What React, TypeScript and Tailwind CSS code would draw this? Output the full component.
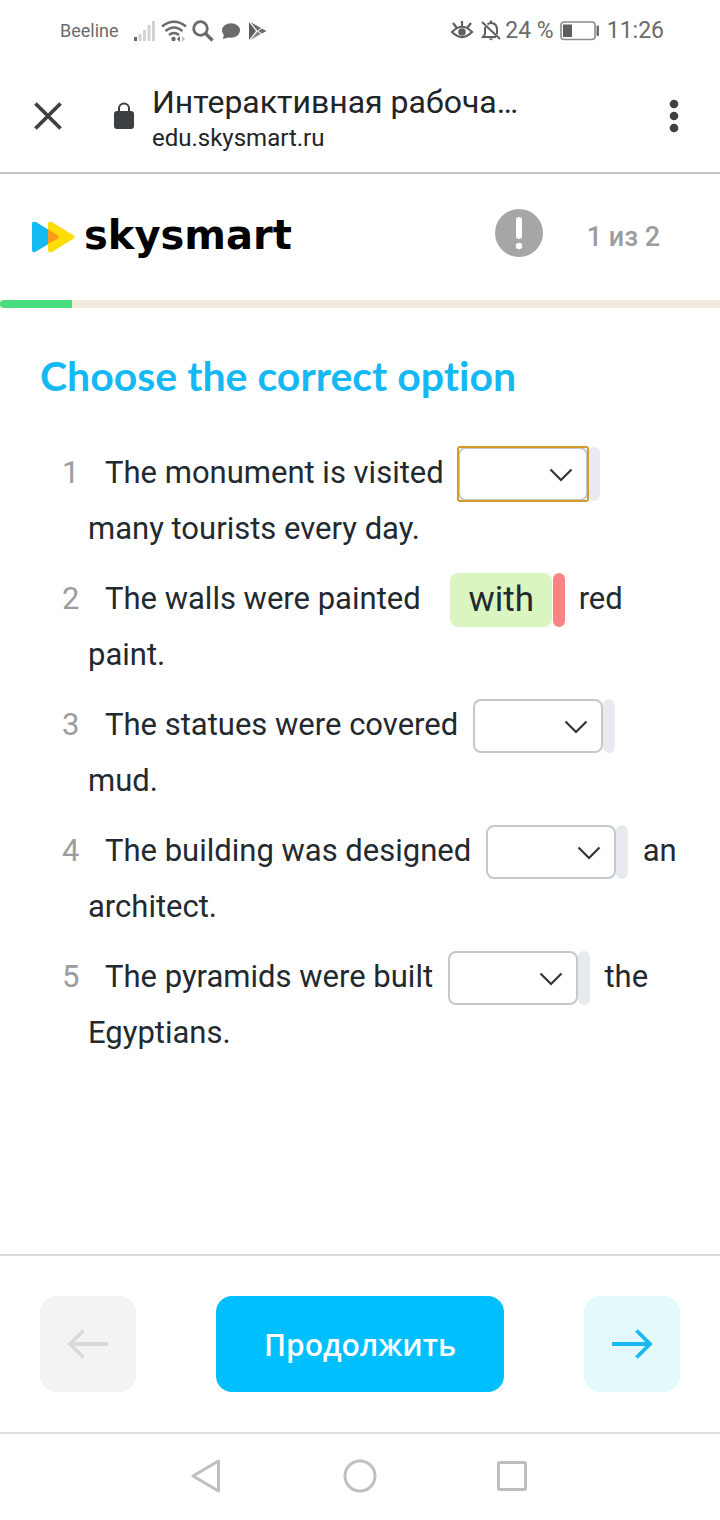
import type { ReactNode } from "react";

type Question = { id: number; before: string; after: string[]; answer?: string; focused?: boolean };

const questions: Question[] = [
  { id: 1, before: "The monument is visited", after: ["many tourists every day."], focused: true },
  { id: 2, before: "The walls were painted", after: ["red", "paint."], answer: "with" },
  { id: 3, before: "The statues were covered", after: ["mud."] },
  { id: 4, before: "The building was designed", after: ["an", "architect."] },
  { id: 5, before: "The pyramids were built", after: ["the", "Egyptians."] },
];

function StatusBar() {
  return (
    <div className="flex h-[62px] items-center justify-between pr-[56px] pl-[60px] text-[#6b6b6b]">
      <div className="flex items-center gap-[5px]">
        <span className="mr-[10px] text-[18px] leading-6">Beeline</span>
        <svg width="22" height="22" viewBox="0 0 22 22" aria-hidden="true">
          <path d="M0 17h3v4H0z" fill="#6b6b6b" />
          <path d="M4.500 14h3v7h-3zM9 10h3v11H9zM13.500 5h3v16h-3zM18 1h3v20h-3z" fill="#d2d2d2" />
        </svg>
        <svg width="26" height="22" viewBox="0 0 26 22" fill="none" stroke="#6b6b6b" strokeWidth="2.400" aria-hidden="true">
          <path d="M1 6.500Q13-3 25 6.500M4.500 11Q13 4 21.500 11M8 15Q13 11 18 15" />
          <circle cx="12.500" cy="19" r="2.200" fill="#6b6b6b" stroke="none" />
          <path d="M19 16l-3 3 3 3z" fill="#6b6b6b" stroke="none" />
          <path d="M21 16l3 3-3 3z" fill="#bdbdbd" stroke="none" />
        </svg>
        <svg width="22" height="22" viewBox="0 0 22 22" fill="none" stroke="#6b6b6b" aria-hidden="true">
          <circle cx="8.500" cy="8.500" r="6.800" strokeWidth="2.800" />
          <path d="M13.500 13.500l7 7" strokeWidth="3.400" />
        </svg>
        <svg className="ml-[2px]" width="20" height="20" viewBox="0 0 20 20" fill="#6b6b6b" aria-hidden="true">
          <ellipse cx="10" cy="9.500" rx="9" ry="7.300" />
          <path d="M3 13l-1 5 7-2z" />
        </svg>
        <svg className="ml-[2px]" width="20" height="20" viewBox="0 0 20 20" aria-hidden="true">
          <path d="M1 1l7 9-7 9z" fill="#5f5f5f" />
          <path d="M2.500 1L13 7l-3.500 2.800z" fill="#6b6b6b" />
          <path d="M2.500 19L13 13l-3.500-2.800z" fill="#8b8b8b" />
          <path d="M14 7.500L18.500 10 14 12.500l-3.500-2.500z" fill="#6b6b6b" />
        </svg>
      </div>
      <div className="flex items-center text-[23px] leading-7">
        <svg width="24" height="22" viewBox="0 0 24 22" fill="none" stroke="#5f5f5f" strokeWidth="2.200" aria-hidden="true">
          <path d="M2 12Q12 1.500 22 12Q12 22 2 12zM12 6V1M6.500 7.500L3 3M17.500 7.500L21 3" />
          <circle cx="12" cy="12" r="3.800" fill="#5f5f5f" stroke="none" />
        </svg>
        <svg className="mr-[4px] ml-[7px]" width="20" height="22" viewBox="0 0 20 22" fill="none" stroke="#5f5f5f" strokeWidth="2" aria-hidden="true">
          <path d="M1 2l18 17M4 7v7l-2 3h13M6.500 4.500Q8 3 10 3q6 0 6 7v4M10 3V0.500" />
          <path d="M7.500 18.500h5L10 20.500z" fill="#5f5f5f" stroke="none" />
        </svg>
        <span>24 %</span>
        <svg className="mr-[8px] ml-[6px]" width="39" height="20" viewBox="0 0 39 20" aria-hidden="true">
          <rect x="1" y="1" width="34" height="17.500" rx="3" fill="none" stroke="#8b8b8b" strokeWidth="1.600" />
          <path d="M3 3.500h9v12.500H3z" fill="#5f5f5f" />
          <rect x="36.500" y="4.500" width="2.500" height="10.500" rx="1" fill="#6b6b6b" />
        </svg>
        <span>11:26</span>
      </div>
    </div>
  );
}

function BrowserBar() {
  return (
    <div className="flex h-[112px] items-center border-b-2 border-[#c4c4c4] pr-[40px] pb-[2px] pl-[34px]">
      <button type="button" aria-label="Закрыть" className="mr-[52px] shrink-0">
        <svg width="28" height="28" viewBox="0 0 28 28" stroke="#3c4043" strokeWidth="3.800" aria-hidden="true">
          <path d="M1.500 1.500l25 25M26.500 1.500l-25 25" />
        </svg>
      </button>
      <svg className="mr-[18px] shrink-0" width="20" height="28" viewBox="0 0 20 28" aria-hidden="true">
        <path d="M5 11V6.500a5 5 0 0 1 10 0V11" fill="none" stroke="#3c4043" strokeWidth="2" />
        <rect y="9" width="20" height="18" rx="3" fill="#3c4043" />
      </svg>
      <div className="min-w-0 flex-1 pt-[4px] text-[#222426]">
        <div className="text-[32px] leading-[40px] whitespace-nowrap">Интерактивная рабоча…</div>
        <div className="text-[24px] leading-[32px]">edu.skysmart.ru</div>
      </div>
      <button type="button" aria-label="Меню" className="shrink-0">
        <svg width="12" height="34" viewBox="0 0 12 34" fill="#3c4043" aria-hidden="true">
          <circle cx="6" cy="5" r="4.300" />
          <circle cx="6" cy="17" r="4.300" />
          <circle cx="6" cy="29" r="4.300" />
        </svg>
      </button>
    </div>
  );
}

function LessonHeader() {
  return (
    <header>
      <div className="flex h-[126px] items-center pr-[60px] pl-[32px]">
        <a href="#" className="flex items-center gap-[8px] text-black">
          <svg width="44" height="32" viewBox="0 0 44 32" aria-hidden="true">
            <path d="M3 1Q0 0 0 3V29Q0 32 3 31L25 18Q28 16 25 14L4 1z" fill="#12b9f2" />
            <path d="M20 1Q16 0 16 3V29Q16 32 20 31L41 18Q44 16 41 14L20 1z" fill="#fddd08" />
            <path d="M16 8L25 14Q28 16 25 18L16 23z" fill="#f99a1c" />
          </svg>
          <span className="pb-[4px] font-['DejaVu_Sans',sans-serif] text-[40px] leading-[44px] font-bold">skysmart</span>
        </a>
        <button type="button" aria-label="Сообщить об ошибке" className="mr-[44px] ml-auto pb-[8px]">
          <svg width="48" height="48" viewBox="0 0 48 48" aria-hidden="true">
            <circle cx="24" cy="24" r="24" fill="#a6a6a6" />
            <path d="M24 11v16" stroke="#fff" strokeWidth="6" strokeLinecap="round" />
            <circle cx="24" cy="37" r="3.200" fill="#fff" />
          </svg>
        </button>
        <span className="text-[27px] leading-[36px] font-medium text-[#9c9c9c]">1 из 2</span>
      </div>
      <div className="h-2 bg-[#f2eada]" role="progressbar" aria-valuenow={10} aria-valuemin={0} aria-valuemax={100}>
        <div className="h-full w-1/10 rounded-l-full bg-[#47de80]" />
      </div>
    </header>
  );
}

function Gap({ question }: { question: Question }) {
  if (question.answer) {
    return (
      <span className="-mt-1.5 -mb-1 mr-[6px] ml-[22px] inline-flex h-[54px] align-middle">
        <span className="mr-px flex items-center rounded-lg bg-[#daf5c0] px-[18px] text-[35px] leading-none">{question.answer}</span>
        <span className="w-3 rounded-md bg-[#fb8383]" />
      </span>
    );
  }
  return (
    <span className="-mt-1.5 -mb-1 mx-[7px] inline-flex h-[54px] align-middle">
      <span
        className={
          question.focused
            ? "relative flex rounded-xs outline-2 -outline-offset-1 outline-[#d39a2c]"
            : "relative flex"
        }
      >
        <select
          aria-label={question.before}
          defaultValue=""
          className="w-[130px] appearance-none rounded-lg border-2 border-[#c6c8ca] bg-white px-3"
        >
          <option value=""></option>
          <option value="by">by</option>
          <option value="with">with</option>
        </select>
        <svg className="pointer-events-none absolute top-[21px] right-[15px]" width="24" height="14" viewBox="0 0 24 14" fill="none" stroke="#333" strokeWidth="2.200" aria-hidden="true">
          <path d="M1.500 1.500L12 12 22.500 1.500" />
        </svg>
      </span>
      <span className="w-3 rounded-md bg-[#e7eaee]" />
    </span>
  );
}

function Exercise() {
  return (
    <main className="flex-1 px-[40px] pt-[42px]">
      <h1 className="font-['Lato',sans-serif] text-[41px] leading-[52px] font-bold text-[#14b8f2] [font-variant-ligatures:none]">
        Choose the correct option
      </h1>
      <ol className="mt-[43px] flex flex-col gap-[14px] pl-[48px] text-[31px] leading-[56px] text-[#22292f]">
        {questions.map((q) => (
          <li key={q.id} className="-indent-[26px]">
            <span className="inline-block w-[43px] indent-0 text-[#9a9da0]">{q.id}</span>
            <span>{q.before}</span>{" "}
            <span className="indent-0">
              <Gap question={q} />
            </span>
            {q.after.map((part) => (
              <span key={part}> {part}</span>
            ))}
          </li>
        ))}
      </ol>
    </main>
  );
}

function ArrowButton({ label, className, disabled, children }: { label: string; className: string; disabled?: boolean; children: ReactNode }) {
  return (
    <button type="button" aria-label={label} disabled={disabled} className={className}>
      <svg width="42" height="32" viewBox="0 0 42 32" fill="none" stroke="currentColor" strokeWidth="3.800" aria-hidden="true">
        {children}
      </svg>
    </button>
  );
}

function Footer() {
  return (
    <footer className="flex h-[178px] items-center justify-between border-t-2 border-[#d9d9d9] px-[40px]">
      <ArrowButton label="Назад" disabled className="flex size-24 items-center justify-center rounded-2xl bg-[#f3f3f3] text-[#d9d9d9]">
        <path d="M41 16H3M16.500 2.500L3 16l13.500 13.500" />
      </ArrowButton>
      <button type="button" className="h-24 rounded-2xl bg-[#00bfff] px-[48px] font-['Open_Sans',sans-serif] text-[30px] font-semibold text-white">
        Продолжить
      </button>
      <ArrowButton label="Вперёд" className="flex size-24 items-center justify-center rounded-2xl bg-[#e2fafc] text-[#18b9ef]">
        <path d="M1 16h38M25.500 2.500L39 16 25.500 29.500" />
      </ArrowButton>
    </footer>
  );
}

function SystemNav() {
  return (
    <nav className="flex h-[88px] items-center justify-center gap-[120px] border-t-2 border-[#dfdfdf] pb-[2px]">
      <button type="button" aria-label="Назад">
        <svg width="32" height="34" viewBox="0 0 32 34" fill="none" stroke="#bfbfbf" strokeWidth="3" strokeLinejoin="round" aria-hidden="true">
          <path d="M27.500 2v30L2 17z" />
        </svg>
      </button>
      <button type="button" aria-label="Домой">
        <svg width="34" height="34" viewBox="0 0 34 34" fill="none" stroke="#bfbfbf" strokeWidth="3" aria-hidden="true">
          <circle cx="17" cy="17" r="15" />
        </svg>
      </button>
      <button type="button" aria-label="Недавние">
        <svg width="32" height="34" viewBox="0 0 32 34" fill="none" stroke="#bfbfbf" strokeWidth="3" aria-hidden="true">
          <rect x="1.500" y="3.500" width="27" height="27" rx="1" />
        </svg>
      </button>
    </nav>
  );
}

export default function App() {
  return (
    <div className="flex min-h-screen flex-col bg-white font-['Roboto',sans-serif]">
      <StatusBar />
      <BrowserBar />
      <LessonHeader />
      <Exercise />
      <Footer />
      <SystemNav />
    </div>
  );
}
